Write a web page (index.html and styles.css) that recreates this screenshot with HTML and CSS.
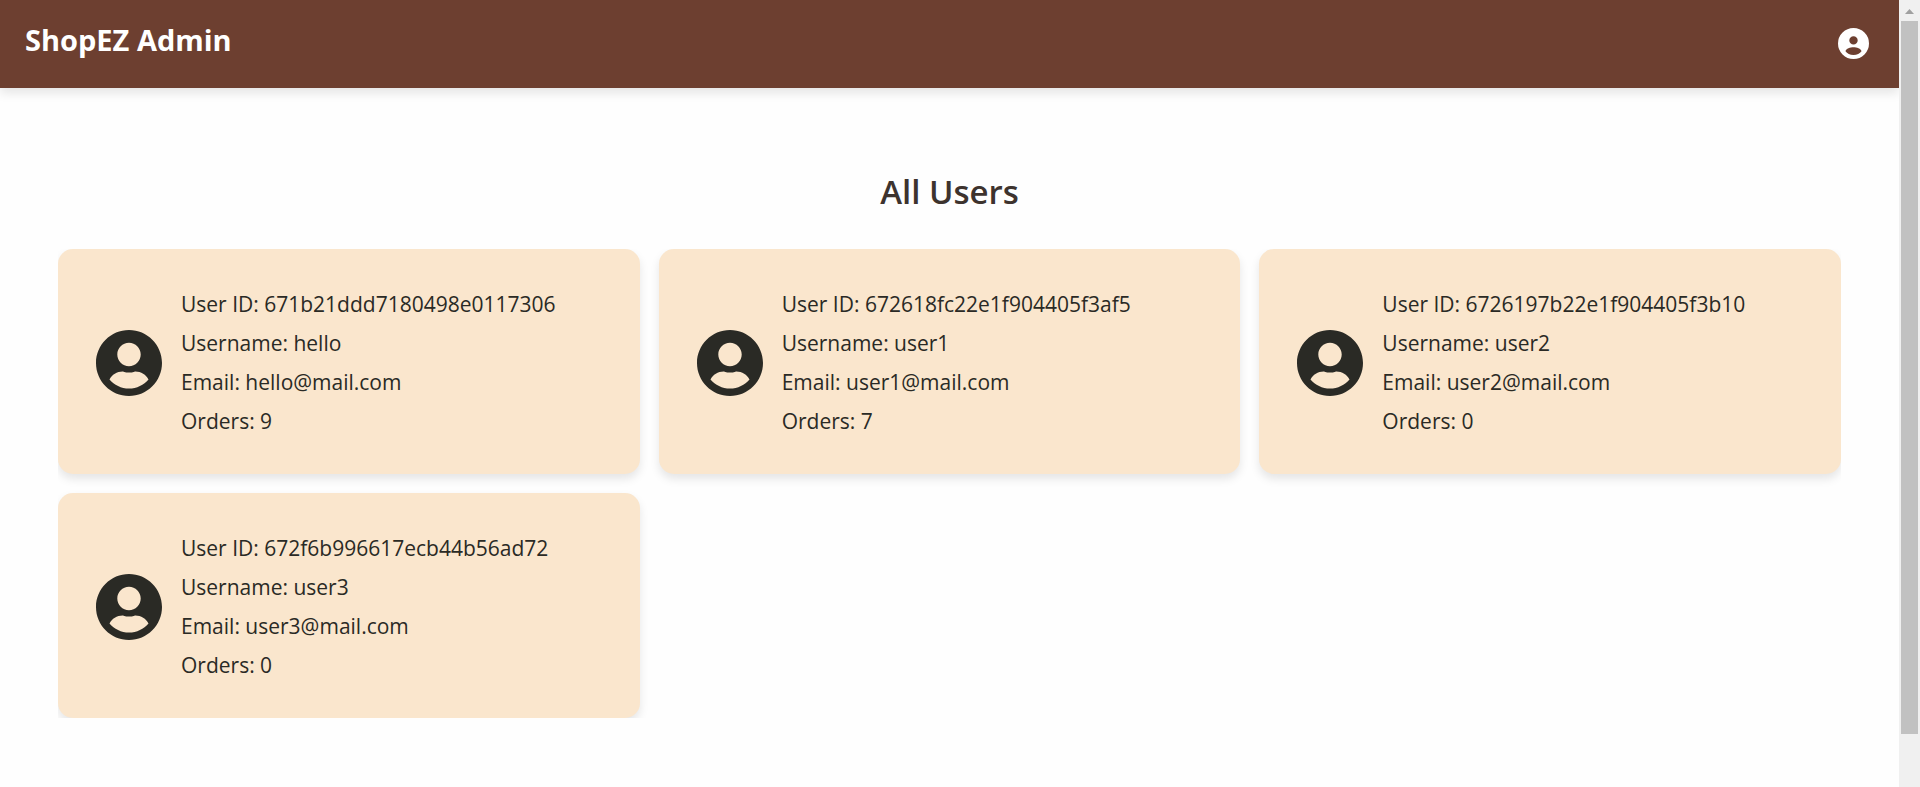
FILE: index.html
```
<!DOCTYPE html>
<html lang="en">
<head>
<meta charset="utf-8">
<title>ShopEZ Admin</title>
<link rel="stylesheet" href="styles.css">
</head>
<body>
<svg class="sprite" aria-hidden="true">
  <symbol id="user" viewBox="0 8 496 496"><path d="M248 8C111 8 0 119 0 256s111 248 248 248 248-111 248-248S385 8 248 8zm0 96c48.600 0 88 39.400 88 88s-39.400 88-88 88-88-39.400-88-88 39.400-88 88-88zm0 344c-58.700 0-111.300-26.600-146.500-68.200 18.800-35.400 55.600-59.800 98.500-59.800 2.400 0 4.800.4 7.100 1.100 13 4.200 26.600 6.900 40.900 6.900 14.300 0 28-2.700 40.900-6.900 2.300-.7 4.700-1.100 7.100-1.100 42.900 0 79.700 24.400 98.500 59.800C359.300 421.400 306.700 448 248 448z"/></symbol>
</svg>
<div class="page">
  <header class="topbar">
    <a class="brand" href="#">ShopEZ Admin</a>
    <button class="account" type="button" aria-label="Account">
      <svg class="account-icon" viewBox="0 0 31 31"><path fill-rule="evenodd" d="M15.500 0a15.500 15.500 0 1 0 0 31a15.500 15.500 0 0 0 0-31zM15.500 8.200a4.200 4.200 0 1 1 0 8.400a4.200 4.200 0 0 1 0-8.400zM15.500 27c-3.500 0-6.400-1.400-8-3.700c.5-2.600 4.800-4 8-4s7.500 1.400 8 4c-1.600 2.300-4.500 3.700-8 3.700z"/></svg>
    </button>
  </header>
  <main class="content">
    <h1 class="title">All Users</h1>
    <ul class="users">
      <li class="card"><svg class="avatar"><use href="#user"/></svg>
        <div class="info"><p>User ID: 671b21ddd7180498e0117306</p><p>Username: hello</p><p>Email: hello@mail.com</p><p>Orders: 9</p></div></li>
      <li class="card"><svg class="avatar"><use href="#user"/></svg>
        <div class="info"><p>User ID: 672618fc22e1f904405f3af5</p><p>Username: user1</p><p>Email: user1@mail.com</p><p>Orders: 7</p></div></li>
      <li class="card"><svg class="avatar"><use href="#user"/></svg>
        <div class="info"><p>User ID: 6726197b22e1f904405f3b10</p><p>Username: user2</p><p>Email: user2@mail.com</p><p>Orders: 0</p></div></li>
      <li class="card"><svg class="avatar"><use href="#user"/></svg>
        <div class="info"><p>User ID: 672f6b996617ecb44b56ad72</p><p>Username: user3</p><p>Email: user3@mail.com</p><p>Orders: 0</p></div></li>
    </ul>
  </main>
</div>
<div class="scrollbar" aria-hidden="true">
  <svg class="scroll-arrow" viewBox="0 0 21 21"><path d="M6 14l4.500-5 4.500 5z"/></svg>
  <div class="scroll-thumb"></div>
</div>
</body>
</html>
```
FILE: styles.css
```
* { box-sizing: border-box; }
body {
  margin: 0;
  min-height: 100vh;
  display: flex;
  background: #fefefe;
  color: #2a2a25;
  font-family: "Segoe UI", "Open Sans", "Noto Sans", sans-serif;
}
.sprite { position: absolute; width: 0; height: 0; }
.page { flex: 1; min-width: 0; }
.topbar {
  display: flex;
  justify-content: space-between;
  align-items: flex-start;
  padding: 20px 25px 28px;
  background: #6d3f30;
  box-shadow: 0 5px 10px rgba(0, 0, 0, 0.1);
}
.brand {
  color: #fff;
  font-size: 29px;
  font-weight: 700;
  line-height: 40px;
  text-decoration: none;
}
.account {
  margin: 8px 5px 0 0;
  padding: 0;
  border: 0;
  background: none;
  color: #fff;
}
.account-icon { display: block; width: 31px; height: 31px; fill: currentColor; }
.content { padding: 80px 58px 0; }
.title {
  margin: 0 0 33px;
  color: #3d332e;
  font-size: 33px;
  font-weight: 600;
  line-height: 48px;
  text-align: center;
}
.users {
  display: grid;
  grid-template-columns: repeat(3, 1fr);
  gap: 19px;
  margin: 0;
  padding: 0;
  list-style: none;
  overflow: hidden;
}
.card {
  display: flex;
  align-items: center;
  gap: 19px;
  padding: 36px 38px 33px;
  border-radius: 15px;
  background: #fae6cd;
  box-shadow: 0 5px 10px rgba(0, 0, 0, 0.1);
}
.avatar { flex: none; width: 66px; height: 66px; fill: #2a2a25; }
.info p {
  margin: 0;
  font-size: 21px;
  line-height: 39px;
}
.scrollbar {
  display: flex;
  flex-direction: column;
  align-items: center;
  width: 21px;
  padding-bottom: 53px;
  background: #f0f0f0;
}
.scroll-arrow { width: 21px; height: 21px; fill: #a0a0a0; }
.scroll-thumb { flex: 1; width: 17px; background: #c1c1c1; }
```
